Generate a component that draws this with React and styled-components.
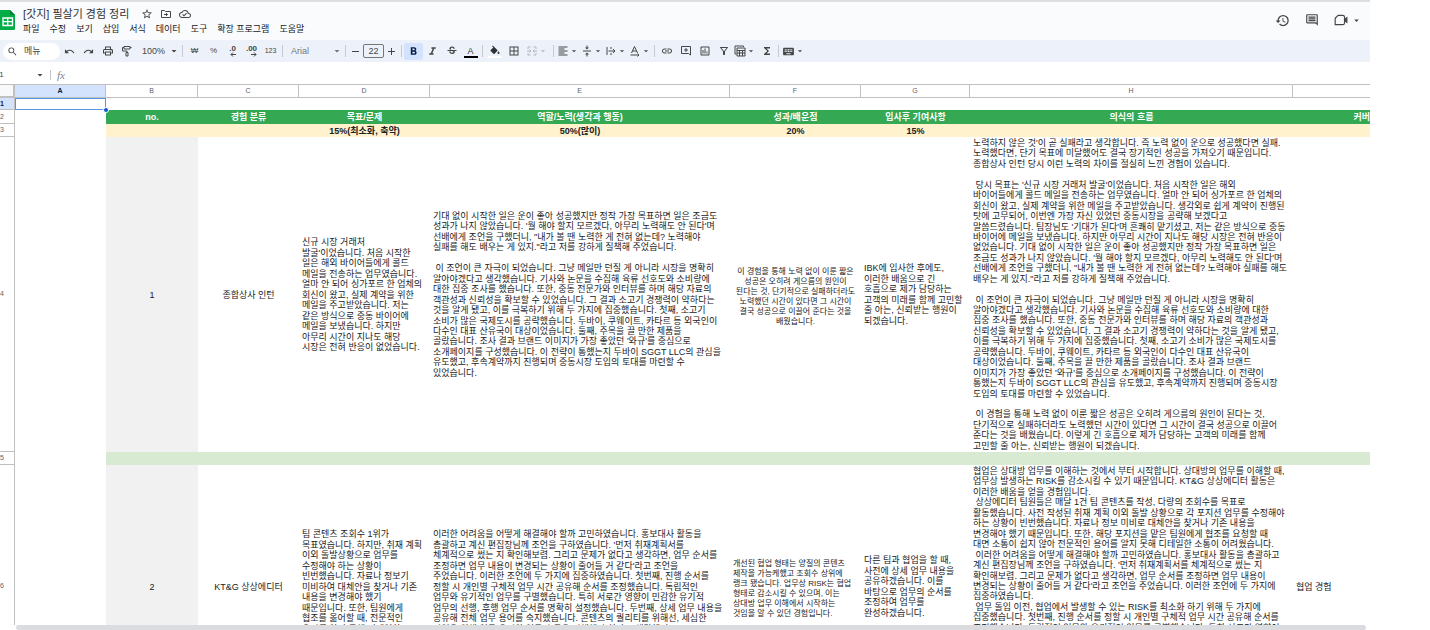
import React, { useState } from "react";
import styled, { createGlobalStyle, css } from "styled-components";
import {
  MdArrowDropDown,
  MdBorderAll,
  MdFormatAlignLeft,
  MdFormatBold,
  MdFormatItalic,
  MdFunctions,
  MdHistory,
  MdKeyboard,
  MdLink,
  MdOutlineCloudDone,
  MdOutlineFilterAlt,
  MdOutlineInsertChart,
  MdOutlineInsertComment,
  MdOutlinePrint,
  MdRedo,
  MdSearch,
  MdStarBorder,
  MdStrikethroughS,
  MdUndo,
  MdVerticalAlignCenter,
} from "react-icons/md";

const menus = [
  "파일",
  "수정",
  "보기",
  "삽입",
  "서식",
  "데이터",
  "도구",
  "확장 프로그램",
  "도움말",
];

const columns = [
  { name: "A", width: 91 },
  { name: "B", width: 92 },
  { name: "C", width: 101 },
  { name: "D", width: 131 },
  { name: "E", width: 300 },
  { name: "F", width: 131 },
  { name: "G", width: 109 },
  { name: "H", width: 323 },
  { name: "" },
];

const headings = [
  "no.",
  "경험 분류",
  "목표/문제",
  "역할/노력(생각과 행동)",
  "성과/배운점",
  "입사후 기여사항",
  "의식의 흐름",
];

const weights = ["", "", "15%(최소화, 축약)", "50%(많이)", "20%", "15%", ""];

const first = {
  goal: `신규 시장 거래처
발굴'이었습니다. 처음 시작한
일은 해외 바이어들에게 콜드
메일을 전송하는 업무였습니다.
얼마 안 되어 싱가포르 한 업체의
회신이 왔고, 실제 계약을 위한
메일을 주고받았습니다. 저는
같은 방식으로 중동 바이어에
메일을 보냈습니다. 하지만
아무리 시간이 지나도 해당
시장은 전혀 반응이 없었습니다.`,
  effort: `기대 없이 시작한 일은 운이 좋아 성공했지만 정작 가장 목표하면 일은 조금도
성과가 나지 않았습니다. '뭘 해야 할지 모르겠다, 아무리 노력해도 안 된다'며
선배에게 조언을 구했더니, "내가 볼 땐 노력한 게 전혀 없는데? 노력해야
실패를 해도 배우는 게 있지."라고 저를 강하게 질책해 주었습니다.

 이 조언이 큰 자극이 되었습니다. 그냥 메일만 던질 게 아니라 시장을 명확히
알아야겠다고 생각했습니다. 기사와 논문을 수집해 육류 선호도와 소비량에
대한 집중 조사를 했습니다. 또한, 중동 전문가와 인터뷰를 하며 해당 자료의
객관성과 신뢰성을 확보할 수 있었습니다. 그 결과 소고기 경쟁력이 약하다는
것을 알게 됐고, 이를 극복하기 위해 두 가지에 집중했습니다. 첫째, 소고기
소비가 많은 국제도시를 공략했습니다. 두바이, 쿠웨이트, 카타르 등 외국인이
다수인 대표 산유국이 대상이었습니다. 둘째, 주목을 끌 만한 제품을
골랐습니다. 조사 결과 브랜드 이미지가 가장 좋았던 '와규'를 중심으로
소개페이지를 구성했습니다. 이 전략이 통했는지 두바이 SGGT LLC의 관심을
유도했고, 후속계약까지 진행되며 중동시장 도입의 토대를 마련할 수
있었습니다.`,
  result: `이 경험을 통해 노력 없이 이룬 짧은
성공은 오히려 게으름의 원인이
된다는 것, 단기적으로 실패하더라도
노력했던 시간이 있다면 그 시간이
결국 성공으로 이끌어 준다는 것을
배웠습니다.`,
  future: `IBK에 입사한 후에도,
이러한 배움으로 긴
호흡으로 제가 담당하는
고객의 미래를 함께 고민할
줄 아는, 신뢰받는 행원이
되겠습니다.`,
  flow: `노력하지 않은 것'이 곧 실패라고 생각합니다. 즉 노력 없이 운으로 성공했다면 실패.
노력했다면, 단기 목표에 미달했어도 결국 장기적인 성공을 가져오기 때문입니다.
종합상사 인턴 당시 이런 노력의 차이를 절실히 느낀 경험이 있습니다.

 당시 목표는 '신규 시장 거래처 발굴'이었습니다. 처음 시작한 일은 해외
바이어들에게 콜드 메일을 전송하는 업무였습니다. 얼마 안 되어 싱가포르 한 업체의
회신이 왔고, 실제 계약을 위한 메일을 주고받았습니다. 생각외로 쉽게 계약이 진행된
탓에 고무되어, 이번엔 가장 자신 있었던 중동시장을 공략해 보겠다고
말씀드렸습니다. 팀장님도 '기대가 된다'며 흔쾌히 맡기셨고, 저는 같은 방식으로 중동
바이어에 메일을 보냈습니다. 하지만 아무리 시간이 지나도 해당 시장은 전혀 반응이
없었습니다. 기대 없이 시작한 일은 운이 좋아 성공했지만 정작 가장 목표하면 일은
조금도 성과가 나지 않았습니다. '뭘 해야 할지 모르겠다, 아무리 노력해도 안 된다'며
선배에게 조언을 구했더니, "내가 볼 땐 노력한 게 전혀 없는데? 노력해야 실패를 해도
배우는 게 있지."라고 저를 강하게 질책해 주었습니다.

 이 조언이 큰 자극이 되었습니다. 그냥 메일만 던질 게 아니라 시장을 명확히
알아야겠다고 생각했습니다. 기사와 논문을 수집해 육류 선호도와 소비량에 대한
집중 조사를 했습니다. 또한, 중동 전문가와 인터뷰를 하며 해당 자료의 객관성과
신뢰성을 확보할 수 있었습니다. 그 결과 소고기 경쟁력이 약하다는 것을 알게 됐고,
이를 극복하기 위해 두 가지에 집중했습니다. 첫째, 소고기 소비가 많은 국제도시를
공략했습니다. 두바이, 쿠웨이트, 카타르 등 외국인이 다수인 대표 산유국이
대상이었습니다. 둘째, 주목을 끌 만한 제품을 골랐습니다. 조사 결과 브랜드
이미지가 가장 좋았던 '와규'를 중심으로 소개페이지를 구성했습니다. 이 전략이
통했는지 두바이 SGGT LLC의 관심을 유도했고, 후속계약까지 진행되며 중동시장
도입의 토대를 마련할 수 있었습니다.

 이 경험을 통해 노력 없이 이룬 짧은 성공은 오히려 게으름의 원인이 된다는 것,
단기적으로 실패하더라도 노력했던 시간이 있다면 그 시간이 결국 성공으로 이끌어
준다는 것을 배웠습니다. 이렇게 긴 호흡으로 제가 담당하는 고객의 미래를 함께
고민할 줄 아는, 신뢰받는 행원이 되겠습니다.`,
};

const second = {
  goal: `팀 콘텐츠 조회수 1위가
목표였습니다. 하지만, 취재 계획
이외 돌발상황으로 업무를
수정해야 하는 상황이
빈번했습니다. 자료나 정보기
미비하여 대체안을 찾거나 기존
내용을 변경해야 했기
때문입니다. 또한, 팀원에게
협조를 옮어할 때, 전문적인
용어를 알지 못해 디테일한
`,
  effort: `이러한 어려움을 어떻게 해결해야 할까 고민하였습니다. 홍보대사 활동을
총괄하고 계신 편집장님께 조언을 구하였습니다. '먼저 취재계획서를
체계적으로 썼는 지 확인해보렴. 그리고 문제가 없다고 생각하면, 업무 순서를
조정하면 업무 내용이 변경되는 상황이 줄어들 거 같다'라고 조언을
주었습니다. 이러한 조언에 두 가지에 집중하였습니다. 첫번째, 진행 순서를
정할 시 개인별 구체적 업무 시간 공유해 순서를 조정했습니다. 독립적인
업무와 유기적인 업무를 구별했습니다. 특히 서로간 영향이 민감한 유기적
업무의 선행, 후행 업무 순서를 명확히 설정했습니다. 두번째, 상세 업무 내용을
공유해 전체 업무 용어를 숙지했습니다. 콘텐츠의 퀄리티를 위해선, 세심한
작업을 위해 업무 용어와 업무 흐름을 이해해야 한다고 생각했기
`,
  result: `개선된 협업 형태는 양질의 콘텐츠
제작을 가능케했고 조회수 상위에
랭크 됐습니다. 업무상 RISK는 협업
형태로 감소시킬 수 있으며, 이는
상대방 업무 이해에서 시작하는
것임을 알 수 있던 경험입니다.`,
  future: `다른 팀과 협업을 할 때,
사전에 상세 업무 내용을
공유하겠습니다. 이를
바탕으로 업무의 순서를
조정하여 업무를
완성하겠습니다.`,
  flow: `협업은 상대방 업무를 이해하는 것에서 부터 시작합니다. 상대방의 업무를 이해할 때,
업무상 발생하는 RISK를 감소시킬 수 있기 때문입니다. KT&G 상상에디터 활동은
이러한 배움을 얻을 경험입니다.
 상상에디터 팀원들은 매달 1건 팀 콘텐츠를 작성, 다량의 조회수를 목표로
활동했습니다. 사전 작성된 취재 계획 이외 돌발 상황으로 각 포지션 업무를 수정해야
하는 상황이 빈번했습니다. 자료나 정보 미비로 대체안을 찾거나 기존 내용을
변경해야 했기 때문입니다. 또한, 해당 포지션을 맡은 팀원에게 협조를 요청할 때
대면 소통이 쉽지 않아 전문적인 용어를 알지 못해 디테일한 소통이 어려웠습니다.
 이러한 어려움을 어떻게 해결해야 할까 고민하였습니다. 홍보대사 활동을 총괄하고
계신 편집장님께 조언을 구하였습니다. '먼저 취재계획서를 체계적으로 썼는 지
확인해보렴. 그리고 문제가 없다고 생각하면, 업무 순서를 조정하면 업무 내용이
변경되는 상황이 줄어들 거 같다'라고 조언을 주었습니다. 이러한 조언에 두 가지에
집중하였습니다.
 업무 돌입 이전, 협업에서 발생할 수 있는 RISK를 최소화 하기 위해 두 가지에
집중했습니다. 첫번째, 진행 순서를 정할 시 개인별 구체적 업무 시간 공유해 순서를
조정했습니다. 독립적인 업무와 유기적인 업무를 구별했습니다. 특히 서로간 영향이`,
};

function App() {
  return (
    <>
      <GlobalStyle />
      <Page>
        <TitleBar />
        <Toolbar />
        <FormulaBar />
        <Sheet />
        <ScrollTrack>
          <ScrollThumb />
        </ScrollTrack>
      </Page>
    </>
  );
}

function TitleBar() {
  return (
    <StyledTitleBar>
      <SheetsLogo />
      <TitleBlock>
        <TitleLine>
          <Title>[갓지] 필살기 경험 정리</Title>
          <IconButton aria-label="별표">
            <MdStarBorder size={12} />
          </IconButton>
          <IconButton aria-label="이동">
            <FolderMoveIcon />
          </IconButton>
          <IconButton aria-label="문서 상태">
            <MdOutlineCloudDone size={12} />
          </IconButton>
        </TitleLine>
        <Menus>
          {menus.map((menu) => (
            <MenuButton key={menu}>{menu}</MenuButton>
          ))}
        </Menus>
      </TitleBlock>
      <Actions>
        <ActionButton aria-label="버전 기록">
          <MdHistory size={15} />
        </ActionButton>
        <ActionButton aria-label="댓글">
          <MdOutlineInsertComment size={14} />
        </ActionButton>
        <ActionButton aria-label="영상 통화">
          <MeetIcon />
          <MdArrowDropDown size={11} />
        </ActionButton>
      </Actions>
    </StyledTitleBar>
  );
}

function Toolbar() {
  const [size, setSize] = useState("22");

  return (
    <StyledToolbar>
      <SearchBox>
        <MdSearch size={11} />
        <input aria-label="메뉴 검색" placeholder="메뉴" />
      </SearchBox>
      <Tool aria-label="실행취소">
        <MdUndo size={11} />
      </Tool>
      <Tool aria-label="재실행">
        <MdRedo size={11} />
      </Tool>
      <Tool aria-label="인쇄">
        <MdOutlinePrint size={12} />
      </Tool>
      <Tool aria-label="서식 복사">
        <PaintRollerIcon />
      </Tool>
      <Picker $width={44}>
        <select aria-label="확대/축소">
          <option>100%</option>
        </select>
        <MdArrowDropDown size={12} />
      </Picker>
      <Divider />
      <Tool>₩</Tool>
      <Tool>%</Tool>
      <Tool aria-label="소수점 이하 자릿수 감소">
        <DecimalIcon label=".0" />
      </Tool>
      <Tool aria-label="소수점 이하 자릿수 증가">
        <DecimalIcon label=".00" right />
      </Tool>
      <Tool $small>123</Tool>
      <Divider />
      <Picker $width={58} $muted>
        <select aria-label="글꼴">
          <option>Arial</option>
        </select>
        <MdArrowDropDown size={12} />
      </Picker>
      <Divider />
      <StepButton aria-label="글꼴 크기 줄이기">
        <PlusMinusIcon />
      </StepButton>
      <SizeInput
        aria-label="글꼴 크기"
        value={size}
        onChange={(e) => setSize(e.target.value)}
      />
      <StepButton aria-label="글꼴 크기 늘리기">
        <PlusMinusIcon plus />
      </StepButton>
      <Divider />
      <Tool $active aria-label="굵게">
        <MdFormatBold size={13} />
      </Tool>
      <Tool aria-label="기울임꼴">
        <MdFormatItalic size={13} />
      </Tool>
      <Tool aria-label="취소선">
        <MdStrikethroughS size={12} />
      </Tool>
      <Tool aria-label="텍스트 색상">
        <ColorMark $color="#000">A</ColorMark>
      </Tool>
      <Divider />
      <Tool aria-label="채우기 색상">
        <ColorMark $color="#fff">
          <BucketIcon />
        </ColorMark>
      </Tool>
      <Tool aria-label="테두리">
        <MdBorderAll size={12} />
      </Tool>
      <DropTool $wide $disabled aria-label="셀 병합">
        <MergeIcon />
        <MdArrowDropDown size={10} />
      </DropTool>
      <Divider />
      <DropTool aria-label="가로 정렬">
        <MdFormatAlignLeft size={12} />
        <MdArrowDropDown size={10} />
      </DropTool>
      <DropTool aria-label="세로 정렬">
        <MdVerticalAlignCenter size={12} />
        <MdArrowDropDown size={10} />
      </DropTool>
      <DropTool aria-label="텍스트 줄바꿈">
        <WrapIcon />
        <MdArrowDropDown size={10} />
      </DropTool>
      <DropTool aria-label="텍스트 회전">
        <RotateIcon />
        <MdArrowDropDown size={10} />
      </DropTool>
      <Divider />
      <Tool aria-label="링크 삽입">
        <MdLink size={12} />
      </Tool>
      <Tool aria-label="댓글 삽입">
        <AddCommentIcon />
      </Tool>
      <Tool aria-label="차트 삽입">
        <MdOutlineInsertChart size={12} />
      </Tool>
      <Tool aria-label="필터">
        <MdOutlineFilterAlt size={12} />
      </Tool>
      <DropTool aria-label="필터 보기">
        <TableViewIcon />
        <MdArrowDropDown size={10} />
      </DropTool>
      <Tool aria-label="함수">
        <MdFunctions size={12} />
      </Tool>
      <Divider />
      <DropTool aria-label="입력 도구">
        <MdKeyboard size={13} />
        <MdArrowDropDown size={10} />
      </DropTool>
    </StyledToolbar>
  );
}

function FormulaBar() {
  return (
    <StyledFormulaBar>
      <NameBox>
        <input aria-label="이름 상자" defaultValue="A1" />
        <MdArrowDropDown size={12} />
      </NameBox>
      <Formula>
        <label htmlFor="formula">fx</label>
        <input id="formula" />
      </Formula>
    </StyledFormulaBar>
  );
}

function Sheet() {
  return (
    <SheetArea>
      <Grid>
        <colgroup>
          <RowHeadCol />
          {columns.map((column, index) => (
            <Column key={index} $width={column.width} />
          ))}
        </colgroup>
        <thead>
          <tr>
            <Corner />
            {columns.map((column, index) => (
              <ColumnHead key={index} scope="col" $selected={index === 0}>
                {column.name}
              </ColumnHead>
            ))}
          </tr>
        </thead>
        <tbody>
          <Row $height={12}>
            <RowHead scope="row" $selected>
              1
            </RowHead>
            <SelectedCell>
              <FillHandle />
            </SelectedCell>
            <Cell colSpan={8} />
          </Row>
          <Row $height={14}>
            <RowHead scope="row">2</RowHead>
            <Cell />
            {headings.map((heading) => (
              <HeadingCell key={heading}>{heading}</HeadingCell>
            ))}
            <HeadingCell $end>커버</HeadingCell>
          </Row>
          <Row $height={13}>
            <RowHead scope="row">3</RowHead>
            <Cell />
            {weights.map((weight, index) => (
              <Cell key={index} $fill="#fff2cc" $center $bold>
                {weight}
              </Cell>
            ))}
            <Cell $fill="#fff2cc" />
          </Row>
          <ExperienceRow
            head="4"
            height={315}
            no="1"
            category="종합상사 인턴"
            data={first}
            flowHeight={313}
            effortHeight={167}
            centerResult
          />
          <Row $height={13}>
            <RowHead scope="row">5</RowHead>
            <Cell />
            <Cell $fill="#d9ead3" colSpan={8} />
          </Row>
          <ExperienceRow
            head="6"
            height={243}
            no="2"
            category="KT&G 상상에디터"
            data={second}
            flowHeight={167}
            effortHeight={115}
            flowTop
            note="협업 경험"
          />
        </tbody>
      </Grid>
    </SheetArea>
  );
}

function ExperienceRow(props) {
  const { data } = props;
  return (
    <Row $height={props.height}>
      <RowHead scope="row">{props.head}</RowHead>
      <Cell />
      <Cell $fill="#f1f1f1" $center>
        {props.no}
      </Cell>
      <Cell $center>{props.category}</Cell>
      <Cell>
        <Lines text={data.goal} height={115} />
      </Cell>
      <Cell>
        <Lines text={data.effort} height={props.effortHeight} />
      </Cell>
      <Cell $small $center={props.centerResult}>
        <Lines text={data.result} height={56} />
      </Cell>
      <Cell>
        <Lines text={data.future} height={63} />
      </Cell>
      <Cell $top={props.flowTop}>
        <Lines text={data.flow} height={props.flowHeight} />
      </Cell>
      <Cell>{props.note}</Cell>
    </Row>
  );
}

// spreads the wrapped lines of a cell evenly over its text height
function Lines({ text, height }) {
  return (
    <StyledLines $height={height}>
      {text.split("\n").map((line, index) => (
        <span key={index}>{line}</span>
      ))}
    </StyledLines>
  );
}

/* icons */

function SheetsLogo() {
  return (
    <svg width="15" height="20" viewBox="0 0 15 20" aria-hidden="true">
      <path d="M0 0h10l5 5v13.5a1.5 1.5 0 0 1-1.5 1.5H0z" fill="#00ac47" />
      <path d="M10 0l5 5h-5z" fill="#00832d" />
      <path
        d="M3 8h9.500v7.500H3zM3 11.700h9.500M7.700 8v7.500"
        fill="none"
        stroke="#fff"
        strokeWidth="1.3"
      />
    </svg>
  );
}

function FolderMoveIcon() {
  return (
    <svg width="12" height="12" viewBox="0 0 24 24" fill="none">
      <path
        d="M3 5h6l2 2h10v12H3zM8 13h7M12 10l3 3-3 3"
        stroke="currentColor"
        strokeWidth="2"
      />
    </svg>
  );
}

function MeetIcon() {
  return (
    <svg width="14" height="14" viewBox="0 0 24 24" fill="none">
      <path
        d="M7 4h8a3 3 0 0 1 3 3v10a3 3 0 0 1-3 3H2V9z"
        stroke="currentColor"
        strokeWidth="2"
        strokeLinejoin="round"
      />
      <path d="M18 10l5-4v12l-5-4z" fill="currentColor" />
    </svg>
  );
}

function PaintRollerIcon() {
  return (
    <svg width="12" height="12" viewBox="0 0 24 24" fill="none">
      <path
        d="M6 3h12v5H6zM6 5H3v7h9v3M10 15h4v7h-4zM18 5h3"
        stroke="currentColor"
        strokeWidth="2"
      />
    </svg>
  );
}

function BucketIcon() {
  return (
    <svg width="12" height="11" viewBox="0 0 24 20" fill="currentColor">
      <path d="M16.560 8.940L7.620 0 6.210 1.410l2.380 2.380-5.150 5.150a1.490 1.490 0 0 0 0 2.120l5.500 5.500c.29.29.68.44 1.060.44s.77-.15 1.060-.44l5.500-5.500c.59-.58.59-1.530 0-2.120zM19 11.500s-2 2.170-2 3.500a2 2 0 0 0 4 0c0-1.330-2-3.500-2-3.500z" />
    </svg>
  );
}

function DecimalIcon({ label, right }) {
  return (
    <Decimal>
      {label}
      <svg width="6" height="5" viewBox="0 0 6 5" fill="none">
        <path
          d={right ? "M0 2.500h5M3 .5l2 2-2 2" : "M6 2.500H1M3 .5l-2 2 2 2"}
          stroke="currentColor"
        />
      </svg>
    </Decimal>
  );
}

function PlusMinusIcon({ plus }) {
  return (
    <svg width="9" height="9" viewBox="0 0 9 9">
      <path
        d={plus ? "M1 4.500h7M4.500 1v7" : "M1 4.500h7"}
        stroke="currentColor"
        strokeWidth="1"
      />
    </svg>
  );
}

function MergeIcon() {
  return (
    <svg width="12" height="12" viewBox="0 0 24 24" fill="none">
      <path
        d="M9 4H4v4M15 4h5v4M9 20H4v-4M15 20h5v-4M2 12h7M7 9l3 3-3 3M22 12h-7M17 9l-3 3 3 3"
        stroke="currentColor"
        strokeWidth="2"
      />
    </svg>
  );
}

function WrapIcon() {
  return (
    <svg width="12" height="12" viewBox="0 0 24 24" fill="none">
      <path
        d="M4 4v16M12 4v4M12 16v4M7 12h13M16 8l4 4-4 4"
        stroke="currentColor"
        strokeWidth="2"
      />
    </svg>
  );
}

function RotateIcon() {
  return (
    <svg width="12" height="12" viewBox="0 0 24 24" fill="none">
      <path
        d="M5 16L11 3l6 13M7 12h8M3 20h17M17 17l3 3-3 3"
        stroke="currentColor"
        strokeWidth="2"
      />
    </svg>
  );
}

function AddCommentIcon() {
  return (
    <svg width="12" height="12" viewBox="0 0 24 24" fill="none">
      <path
        d="M3 3h18v17l-4-3H3zM12 6v8M8 10h8"
        stroke="currentColor"
        strokeWidth="2"
      />
    </svg>
  );
}

function TableViewIcon() {
  return (
    <svg width="12" height="12" viewBox="0 0 24 24" fill="none">
      <path
        d="M19 4V2H2v16h3M6 6h16v16H6zM6 11h16M6 16h16M11 11v11M17 11v11"
        stroke="currentColor"
        strokeWidth="2"
      />
    </svg>
  );
}

export default App;

/* styling */

const GlobalStyle = createGlobalStyle`
  * {
    box-sizing: border-box;
  }

  body {
    margin: 0;
    background: #fff;
    color: #202124;
    font-family: "Liberation Sans", "Noto Sans CJK KR", sans-serif;
    font-size: 9px;
    line-height: 10px;
  }

  button,
  input,
  select {
    margin: 0;
    padding: 0;
    border: 0;
    background: none;
    color: inherit;
    font: inherit;
    outline: none;
  }

  svg {
    flex: none;
    display: block;
  }
`;

const Page = styled.div`
  display: flex;
  flex-direction: column;
  height: 100vh;
  padding-right: 60px;
  overflow: hidden;
`;

const StyledTitleBar = styled.header`
  display: flex;
  align-items: center;
  height: 40px;
  padding-bottom: 2px;
  border-top: 2px solid #dcdee1;
  background: #f9fbfd;
`;

const TitleBlock = styled.div`
  display: flex;
  flex-direction: column;
  gap: 1px;
  flex: 1;
  padding-left: 8px;
`;

const TitleLine = styled.div`
  display: flex;
  align-items: center;
  gap: 7px;
`;

const Title = styled.h1`
  margin: 0 5px 0 0;
  color: #303134;
  font-size: 11px;
  font-weight: 400;
  line-height: 16px;
`;

const IconButton = styled.button`
  color: #444746;
`;

const Menus = styled.nav`
  display: flex;
  gap: 10px;
`;

const MenuButton = styled.button`
  line-height: 12px;
  white-space: nowrap;
`;

const Actions = styled.div`
  display: flex;
  align-items: center;
  gap: 15px;
  padding-right: 8px;
`;

const ActionButton = styled.button`
  display: flex;
  align-items: center;
  gap: 3px;
  color: #444746;
`;

const StyledToolbar = styled.div`
  display: flex;
  align-items: center;
  flex: none;
  height: 22px;
  background: #edf2fa;
  color: #444746;
`;

const SearchBox = styled.label`
  display: flex;
  align-items: center;
  gap: 6px;
  width: 57px;
  height: 17px;
  margin-left: 3px;
  padding-left: 4px;
  border-radius: 9px;
  background: #fff;

  & input {
    width: 30px;
  }

  & input::placeholder {
    color: #444746;
    opacity: 1;
  }
`;

const Tool = styled.button`
  display: flex;
  align-items: center;
  justify-content: center;
  width: 19px;
  height: 17px;
  font-size: ${({ $small }) => ($small ? 7 : 8)}px;

  ${({ $active }) =>
    $active &&
    css`
      border-radius: 2px;
      background: #d3e3fd;
      color: #041e49;
    `}
`;

const DropTool = styled.button`
  display: flex;
  align-items: center;
  justify-content: center;
  width: ${({ $wide }) => ($wide ? 28 : 24)}px;
  height: 17px;
  color: ${({ $disabled }) => ($disabled ? "#b4b8bd" : "inherit")};
`;

const Picker = styled.label`
  display: flex;
  align-items: center;
  width: ${({ $width }) => $width}px;
  padding-left: 6px;
  color: ${({ $muted }) => ($muted ? "#747775" : "inherit")};

  & select {
    flex: 1;
    min-width: 0;
    appearance: none;
  }
`;

const Divider = styled.span`
  width: 1px;
  height: 12px;
  margin: 0 2px;
  background: #c7cbd1;
`;

const StepButton = styled.button`
  display: flex;
  align-items: center;
  justify-content: center;
  width: 15px;
  height: 17px;
`;

const SizeInput = styled.input`
  width: 21px;
  height: 14px;
  border: 1px solid #747775;
  border-radius: 2px;
  text-align: center;
`;

const ColorMark = styled.span`
  display: flex;
  flex-direction: column;
  align-items: center;
  justify-content: flex-end;
  width: 14px;
  height: 14px;
  border-bottom: 2px solid ${({ $color }) => $color};
  color: #303134;
  font-size: 9px;
`;

const Decimal = styled.span`
  display: flex;
  flex-direction: column;
  align-items: flex-end;
  font-size: 8px;
  font-weight: 700;
  line-height: 7px;
`;

const StyledFormulaBar = styled.div`
  display: flex;
  align-items: center;
  flex: none;
  height: 22px;
  padding-top: 4px;
`;

const NameBox = styled.div`
  display: flex;
  align-items: center;
  justify-content: space-between;
  width: 50px;
  padding-right: 4px;
  color: #444746;

  & input {
    width: 30px;
    margin-left: -6px;
    font-size: 8px;
  }
`;

const Formula = styled.div`
  display: flex;
  align-items: center;
  flex: 1;
  gap: 6px;
  padding-left: 6px;
  border-left: 1px solid #c7c7c7;

  & label {
    color: #80868b;
    font-family: "Liberation Serif", serif;
    font-size: 11px;
    font-style: italic;
  }

  & input {
    flex: 1;
  }
`;

const SheetArea = styled.main`
  flex: 1;
  min-height: 0;
  overflow: hidden;
`;

const Grid = styled.table`
  width: 100%;
  table-layout: fixed;
  border-collapse: separate;
  border-spacing: 0;
`;

const RowHeadCol = styled.col`
  width: 15px;
`;

const Column = styled.col`
  width: ${({ $width }) => ($width ? `${$width}px` : "auto")};
`;

const Corner = styled.td`
  height: 14px;
  padding: 0;
  border: solid #c0c0c0;
  border-width: 1px 2px 2px 0;
  background: #f8f9fa;
`;

const ColumnHead = styled.th`
  height: 14px;
  padding: 0;
  border: solid #c0c0c0;
  border-width: 1px 1px 1px 0;
  background: ${({ $selected }) => ($selected ? "#d3e3fd" : "#fff")};
  color: ${({ $selected }) => ($selected ? "#041e49" : "#5f6368")};
  font-size: 7px;
  font-weight: ${({ $selected }) => ($selected ? 700 : 400)};

  &:last-child {
    border-right: 0;
  }
`;

const Row = styled.tr`
  height: ${({ $height }) => $height}px;
`;

const RowHead = styled.th`
  padding: 0;
  border: solid #c0c0c0;
  border-width: 0 1px 1px 0;
  background: ${({ $selected }) => ($selected ? "#d3e3fd" : "#fff")};
  color: ${({ $selected }) => ($selected ? "#041e49" : "#5f6368")};
  font-size: 7px;
  font-weight: ${({ $selected }) => ($selected ? 700 : 400)};
  text-align: left;
`;

const Cell = styled.td`
  padding: ${({ $top }) => ($top ? "1px 0 0 3px" : "0 0 0 3px")};
  background: ${({ $fill }) => $fill || "#fff"};
  color: #202124;
  font-size: ${({ $small }) => ($small ? 8 : 9)}px;
  font-weight: ${({ $bold }) => ($bold ? 700 : 400)};
  text-align: ${({ $center }) => ($center ? "center" : "left")};
  vertical-align: ${({ $top }) => ($top ? "top" : "middle")};
  white-space: pre;

  ${({ $center }) =>
    $center &&
    css`
      padding: 0;
    `}
`;

const HeadingCell = styled(Cell)`
  padding: 0;
  background: #34a853;
  color: #fff;
  font-weight: 700;
  text-align: ${({ $end }) => ($end ? "right" : "center")};
`;

const SelectedCell = styled(Cell)`
  position: relative;
  border: 1px solid #5b93e6;
`;

const FillHandle = styled.span`
  position: absolute;
  right: -4px;
  bottom: -4px;
  width: 6px;
  height: 6px;
  border: 1px solid #fff;
  border-radius: 50%;
  background: #0b57d0;
`;

const StyledLines = styled.div`
  display: flex;
  flex-direction: column;
  justify-content: space-between;
  height: ${({ $height }) => $height}px;

  & span {
    height: 10px;
  }
`;

const ScrollTrack = styled.div`
  flex: none;
  padding: 0 4px 0 16px;
`;

const ScrollThumb = styled.div`
  height: 5px;
  border-radius: 3px;
  background: #dadce0;
`;
